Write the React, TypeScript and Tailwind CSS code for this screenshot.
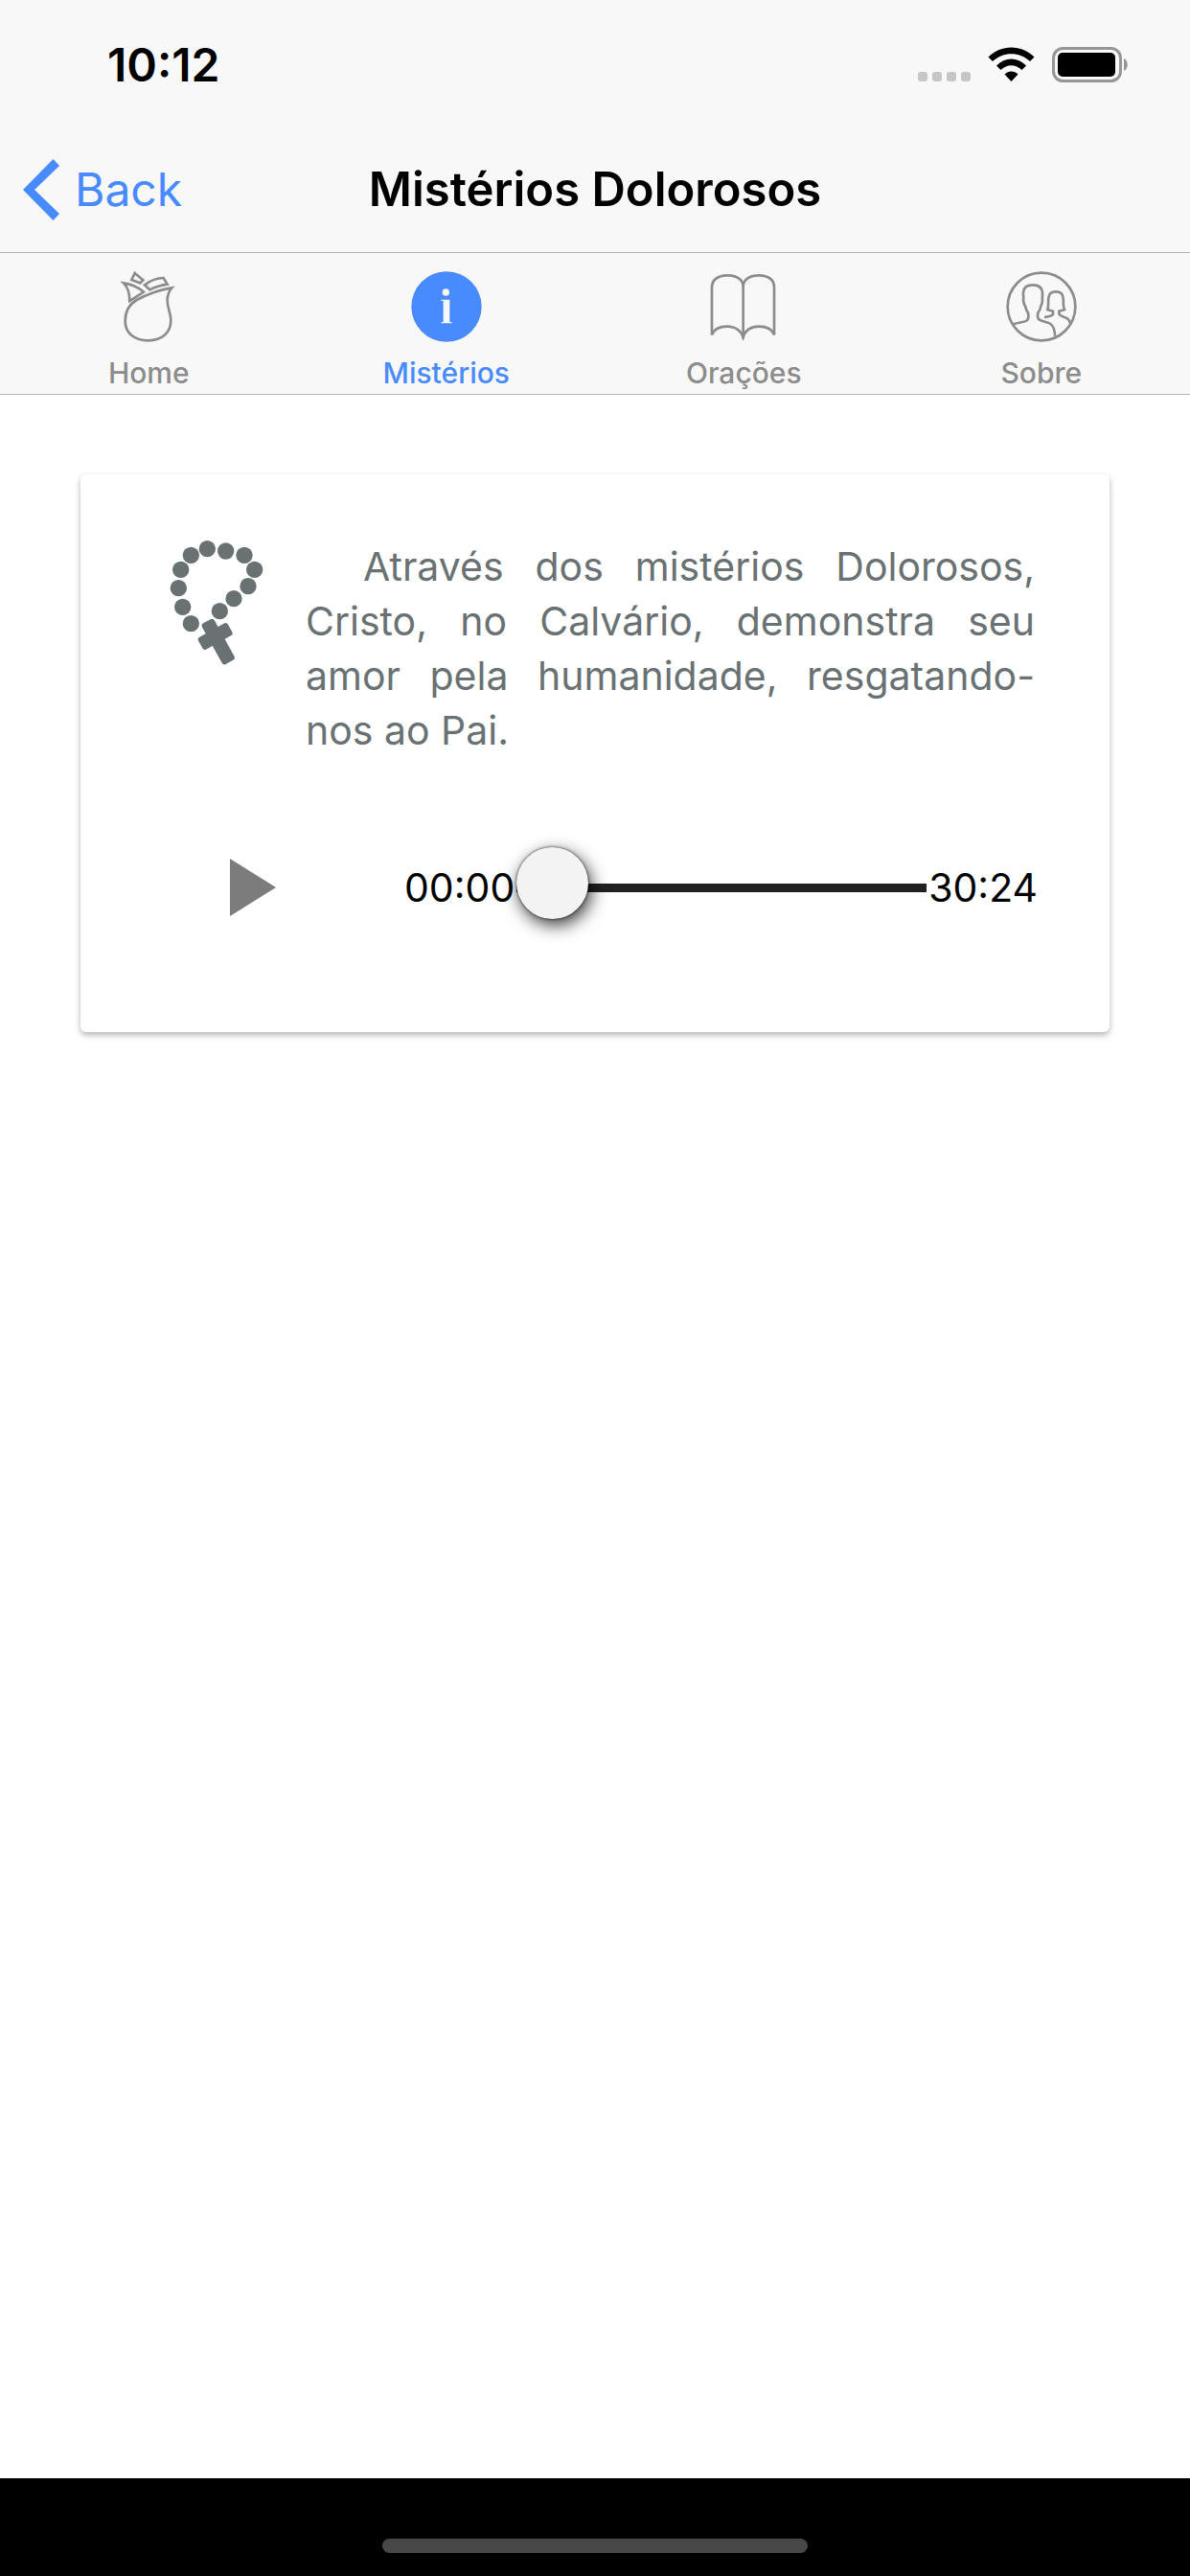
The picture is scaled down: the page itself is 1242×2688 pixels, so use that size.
import React, { useState } from 'react';

const RoseIcon: React.FC = () => (
  <svg className="w-[74px] h-[74px]" viewBox="176 70 222 222" fill="none" stroke="currentColor" strokeWidth="8">
    <path d="M360 122C328 126 281 143 250 160C226 174 214 197 214 226C214 265 244 287 286 287C330 287 357 262 357 224C357 200 345 187 346 158C347 141 352 131 360 122Z" />
    <path d="M209 107C229 110 255 120 272 135L228 163C228 141 223 121 209 107Z" />
    <path d="M244 76L270 98L261 107L234 97Z" />
    <path d="M275 113C292 100 313 91 334 91L346 111C328 114 308 119 291 128Z" />
  </svg>
);

const InfoIcon: React.FC = () => (
  <svg className="w-[74px] h-[74px]" viewBox="176 70 222 222">
    <circle cx="287" cy="181" r="110" fill="currentColor" />
    <circle cx="285" cy="136" r="11" fill="#f8f8f8" />
    <path d="M270 159H297V229L304 230V233H270V230L277 229V163L270 162Z" fill="#f8f8f8" />
  </svg>
);

const BookIcon: React.FC = () => (
  <svg className="w-[74px] h-[74px]" viewBox="178 70 222 222" fill="none" stroke="currentColor" strokeWidth="8">
    <path d="M288 282V118C288 95 267 83 238 83C209 83 190 97 190 120V270" />
    <path d="M288 118C288 95 309 83 337 83C367 83 385 97 385 120V270" />
    <path d="M190 268C197 252 215 243 238 243C262 243 281 255 288 276C295 255 313 243 337 243C360 243 378 252 385 268" />
  </svg>
);

const PeopleIcon: React.FC = () => (
  <svg className="w-[74px] h-[74px]" viewBox="209 70 222 222" fill="none" stroke="currentColor" strokeWidth="8">
    <circle cx="320" cy="181" r="106" />
    <path d="M233 236C250 229 271 231 277 221C280 216 279 205 278 200C273 195 271 188 269 179C265 175 264 168 263 160C265 151 262 145 263 136C264 122 273 113 293 113C314 113 322 123 323 137C324 146 321 153 323 160C322 168 322 173 318 179C317 188 313 195 309 200C308 206 307 216 311 220C319 228 339 228 348 235C360 243 362 256 362 273" />
    <path d="M329 214C340 213 351 212 356 205V195C350 193 343 192 339 190C343 181 340 166 342 154C343 140 350 134 365 134C380 134 387 141 388 154C389 166 387 180 392 190C387 192 381 193 375 195V204C380 213 393 212 401 218C407 222 409 228 410 234" />
  </svg>
);

const RosaryIcon: React.FC = () => {
  const beads = [
    [118, 331], [92, 279], [79, 220], [86, 162], [118, 117], [169, 97], [227, 104],
    [285, 117], [317, 162], [297, 214], [252, 253], [208, 292],
  ];
  return (
    <svg className="w-[98px] h-[132px] text-[#697173]" viewBox="51 68 294 396" fill="currentColor">
      {beads.map(([cx, cy]) => (
        <circle key={`${cx}-${cy}`} cx={cx} cy={cy} r="26" />
      ))}
      <g transform="translate(194 371) rotate(-29)">
        <rect x="-22" y="-54" width="44" height="146" rx="9" />
        <rect x="-53" y="-22" width="106" height="44" rx="9" />
      </g>
    </svg>
  );
};

const tabs = [
  { label: 'Home', icon: RoseIcon },
  { label: 'Mistérios', icon: InfoIcon },
  { label: 'Orações', icon: BookIcon },
  { label: 'Sobre', icon: PeopleIcon },
];

const formatTime = (seconds: number) =>
  `${String(Math.floor(seconds / 60)).padStart(2, '0')}:${String(seconds % 60).padStart(2, '0')}`;

const StatusBar: React.FC = () => (
  <div className="h-[132px] pl-28 pr-16 pt-9 flex justify-between items-start text-black">
    <div className="text-[48px] leading-[64px] font-semibold">10:12</div>
    <svg className="w-[220px] h-[40px] mt-3" viewBox="0 0 220 40">
      {/* Signal */}
      <g fill="#c6c6c6">
        <rect x="0" y="27" width="10" height="10" rx="3" />
        <rect x="15" y="27" width="10" height="10" rx="3" />
        <rect x="30" y="27" width="10" height="10" rx="3" />
        <rect x="45" y="27" width="10" height="10" rx="3" />
      </g>
      {/* Wi-Fi */}
      <path d="M73.500 11.500C86.500 -2 108.500 -2 121.500 11.500L117 16C106 5.500 89 5.500 78 16Z" />
      <path d="M82 20.500C91 11.300 104 11.300 113 20.500L108.500 25C102 18.700 93 18.700 86.500 25Z" />
      <path d="M90.500 29.500C94.500 25.500 100.500 25.500 104.500 29.500L97.500 37Z" />
      {/* Battery */}
      <rect x="141.500" y="2.500" width="70" height="34" rx="10" fill="none" stroke="#969696" strokeWidth="3" />
      <rect x="146" y="7" width="60" height="25" rx="5" />
      <path d="M215 13C220 15 220 24 215 26Z" fill="#969696" />
    </svg>
  </div>
);

const App: React.FC = () => {
  const [position, setPosition] = useState(0);
  const duration = 1824;

  return (
    <div className="min-h-screen flex flex-col bg-white font-['Inter',sans-serif]">
      <header className="bg-[#f8f8f8]">
        <StatusBar />

        {/* Toolbar */}
        <div className="h-[132px] border-b border-[#b2b2b2] grid grid-cols-[1fr_auto_1fr] items-center">
          <button className="justify-self-start flex items-center gap-4 pl-6 text-[#488aff] text-[48px] leading-[64px]">
            <svg className="w-[38px] h-[64px]" viewBox="0 0 38 64" fill="currentColor">
              <path d="M31.500 0L38 7L12 32L38 57L31.500 64L0 32Z" />
            </svg>
            Back
          </button>
          <h1 className="text-[49px] leading-[64px] font-semibold text-black">Mistérios Dolorosos</h1>
        </div>

        {/* Tabs */}
        <nav className="h-[148px] border-b border-[#b2b2b2] grid grid-cols-4">
          {tabs.map(({ label, icon: Icon }) => (
            <a
              key={label}
              href="#"
              className={`flex flex-col items-center gap-3 pt-[19px] ${label === 'Mistérios' ? 'text-[#488aff]' : 'text-[#8c8c8c]'}`}
            >
              <Icon />
              <span className="text-[30px] leading-[40px] font-medium">{label}</span>
            </a>
          ))}
        </nav>
      </header>

      <main className="flex-1 px-21 pt-[83px]">
        <section className="bg-white rounded-md shadow-[0_3px_6px_rgba(0,0,0,0.3)] pt-[68px] pb-[107px]">
          <div className="flex pl-[93px] pr-[78px] gap-[44px]">
            <div className="shrink-0">
              <RosaryIcon />
            </div>
            <p className="flex-1 indent-[60px] text-justify text-[41px] leading-[57px] text-[#697173]">
              Através dos mistérios Dolorosos, Cristo, no Calvário, demonstra seu amor pela humanidade, resgatando-nos ao Pai.
            </p>
          </div>

          {/* Audio player */}
          <div className="flex items-center pl-[156px] pr-[75px] mt-[91px] text-[41px] leading-[88px] text-black">
            <button aria-label="Play" className="mr-[134px]">
              <svg className="w-[48px] h-[60px]" viewBox="0 0 48 60">
                <path d="M0 0L48 30L0 60Z" fill="#7c7c7c" />
              </svg>
            </button>
            <span>{formatTime(position)}</span>
            <input
              type="range"
              aria-label="Position"
              min={0}
              max={duration}
              value={position}
              onChange={(e) => setPosition(Number(e.target.value))}
              className="flex-1 min-w-0 ml-0.5 h-[75px] appearance-none bg-transparent [&::-webkit-slider-runnable-track]:h-[9px] [&::-webkit-slider-runnable-track]:bg-[#212121] [&::-webkit-slider-thumb]:appearance-none [&::-webkit-slider-thumb]:w-[75px] [&::-webkit-slider-thumb]:h-[75px] [&::-webkit-slider-thumb]:-mt-[38px] [&::-webkit-slider-thumb]:rounded-full [&::-webkit-slider-thumb]:bg-[#f3f3f3] [&::-webkit-slider-thumb]:shadow-[3px_6px_18px_rgba(0,0,0,0.8),0_0_3px_rgba(0,0,0,0.8)]"
            />
            <span className="pl-0.5">{formatTime(duration)}</span>
          </div>
        </section>
      </main>

      {/* Home indicator */}
      <footer className="h-[102px] bg-black flex justify-center items-end pb-6">
        <div className="w-[444px] h-[15px] rounded-full bg-[#484848]" />
      </footer>
    </div>
  );
};

export default App;
